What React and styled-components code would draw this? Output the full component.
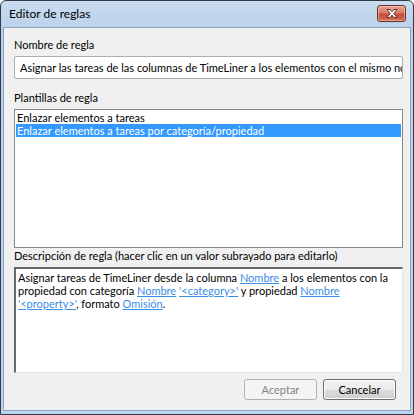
import React from 'react'
import styled, { createGlobalStyle } from 'styled-components'

const Global = createGlobalStyle`
  html, body { margin: 0; padding: 0; background: #ffffff; }
  body { font-family: Lato, 'Noto Sans', sans-serif; font-size: 11px; color: #000; }
`

export default function App () {
  return (
    <>
      <Global />
      <Window>
        <TitleBar>
          <Title>Editor de reglas</Title>
          <CloseButton aria-label='Cerrar'>
            <svg width='14' height='11' viewBox='0 0 14 11'>
              <path
                d='M2 1.5 L5 1.5 L7 3.8 L9 1.5 L12 1.5 L8.6 5.5 L12 9.5 L9 9.5 L7 7.2 L5 9.5 L2 9.5 L5.4 5.5 Z'
                fill='#ffffff'
                stroke='#5a2a26'
                strokeWidth='0.9'
                strokeLinejoin='round'
              />
            </svg>
          </CloseButton>
        </TitleBar>
        <Body>
          <Label>Nombre de regla</Label>
          <TextInput>
            Asignar las tareas de las columnas de TimeLiner a los elementos con el mismo nombre
          </TextInput>

          <Label top={11}>Plantillas de regla</Label>
          <ListBox>
            <ListItem>Enlazar elementos a tareas</ListItem>
            <ListItem selected>Enlazar elementos a tareas por categoría/propiedad</ListItem>
          </ListBox>

          <Label top={0}>Descripción de regla (hacer clic en un valor subrayado para editarlo)</Label>
          <DescBox>
            <DescLine>
              Asignar tareas de TimeLiner desde la columna <Link>Nombre</Link> a los elementos con la
            </DescLine>
            <DescLine>
              propiedad con categoría <Link>Nombre</Link> <Link>'&lt;category&gt;'</Link> y propiedad <Link>Nombre</Link>
            </DescLine>
            <DescLine>
              <Link>'&lt;property&gt;'</Link>, formato <Link>Omisión</Link>.
            </DescLine>
          </DescBox>

          <ButtonRow>
            <DialogButton disabled>Aceptar</DialogButton>
            <DialogButton>Cancelar</DialogButton>
          </ButtonRow>
        </Body>
      </Window>
    </>
  )
}

const Window = styled.div`
  box-sizing: border-box;
  width: 414px;
  height: 415px;
  display: flex;
  flex-direction: column;
  border: 1px solid #2f3a46;
  border-radius: 6px 6px 0 0;
  background: linear-gradient(to bottom, #c9dcf0 0px, #b9d1ea 30px, #bcd4ec 100%);
  padding: 0 2px 3px 2px;
  overflow: hidden;
`
const TitleBar = styled.div`
  height: 26px;
  flex: none;
  display: flex;
  align-items: flex-start;
  justify-content: space-between;
  padding: 0 5px 0 6px;
`
const Title = styled.span`
  font-size: 12px;
  line-height: 16px;
  margin-top: 5px;
  color: #000;
`
const CloseButton = styled.div`
  box-sizing: border-box;
  width: 29px;
  height: 17px;
  margin-top: 4px;
  display: flex;
  align-items: center;
  justify-content: center;
  border: 1px solid #6b2f2a;
  border-radius: 3px;
  background: linear-gradient(to bottom, #e8a495 0%, #d57a67 45%, #c24b34 55%, #d46f54 100%);
  box-shadow: inset 0 0 0 1px rgba(255, 220, 210, 0.5);
`
const Body = styled.div`
  flex: 1;
  display: flex;
  flex-direction: column;
  background: #f0f0f0;
  border: 1px solid #8aa4c2;
  padding: 9px 7px 0 10px;
`
const Label = styled.div`
  margin-top: ${p => (p.top || 0)}px;
  height: 16px;
  line-height: 16px;
  white-space: nowrap;
`
const TextInput = styled.div`
  box-sizing: border-box;
  margin-top: 3px;
  height: 23px;
  line-height: 21px;
  padding: 0 5px;
  background: #fff;
  border: 1px solid #abadb3;
  border-radius: 2px;
  white-space: nowrap;
  overflow: hidden;
`
const ListBox = styled.div`
  box-sizing: border-box;
  margin-top: 3px;
  height: 139px;
  background: #fff;
  border: 1px solid #828790;
  padding: 1px;
`
const ListItem = styled.div`
  height: 13px;
  line-height: 13px;
  padding-left: 1px;
  white-space: nowrap;
  background: ${p => (p.selected ? '#3399ff' : 'transparent')};
  color: ${p => (p.selected ? '#fff' : '#000')};
`
const DescBox = styled.div`
  box-sizing: border-box;
  margin-top: 3px;
  height: 106px;
  background: #fff;
  border-style: solid;
  border-width: 2px 1px 1px 2px;
  border-color: #696969 #e3e3e3 #e3e3e3 #696969;
  padding: 2px 2px;
`
const DescLine = styled.div`
  height: 13px;
  line-height: 13px;
  white-space: nowrap;
`
const Link = styled.span`
  color: #3b8ee8;
  text-decoration: underline;
`
const ButtonRow = styled.div`
  display: flex;
  justify-content: flex-end;
  gap: 6px;
  margin-top: 6px;
  padding-right: 7px;
`
const DialogButton = styled.button`
  box-sizing: border-box;
  width: 73px;
  height: 21px;
  padding: 0;
  font-family: inherit;
  font-size: 11px;
  border-radius: 3px;
  border: 1px solid ${p => (p.disabled ? '#adb2b5' : '#707070')};
  color: ${p => (p.disabled ? '#838383' : '#000')};
  background: ${p => (p.disabled
    ? '#f4f4f4'
    : 'linear-gradient(to bottom, #f2f2f2 0%, #ebebeb 50%, #dddddd 51%, #cfcfcf 100%)')};
  box-shadow: ${p => (p.disabled ? 'none' : 'inset 0 0 0 1px #fcfcfc')};
`
